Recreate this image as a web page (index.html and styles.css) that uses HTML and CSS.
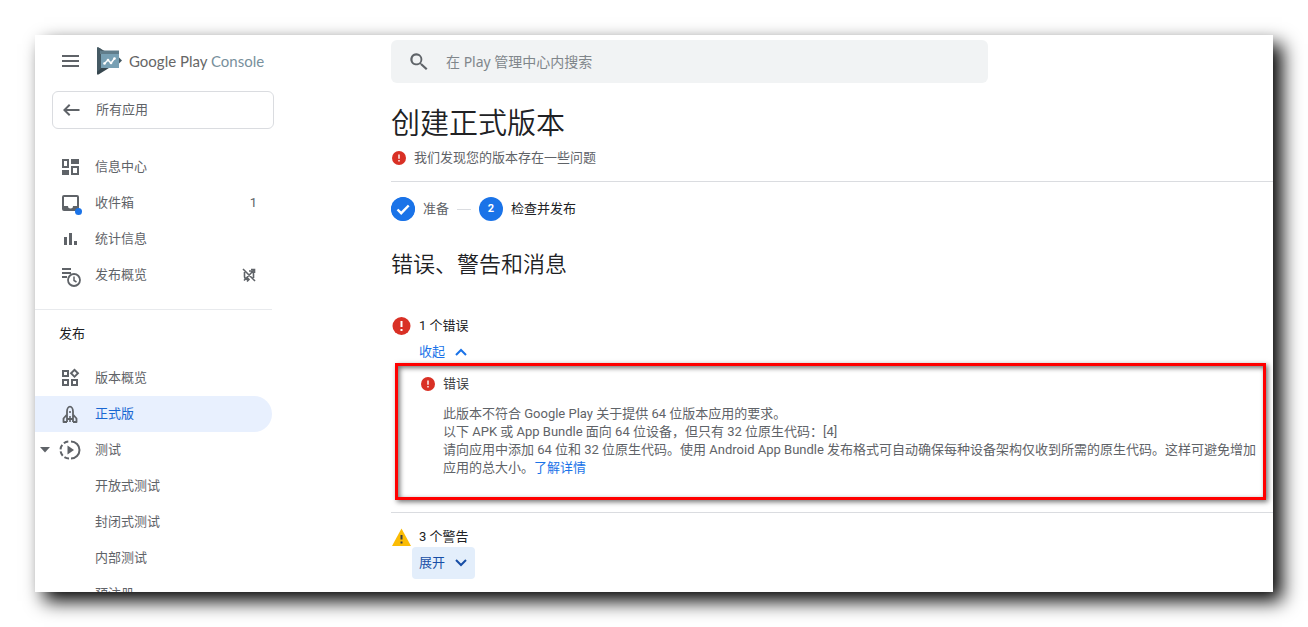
FILE: index.html
```html
<!DOCTYPE html>
<html lang="zh-CN">
<head>
<meta charset="utf-8">
<title>Google Play Console</title>
<link rel="stylesheet" href="styles.css">
</head>
<body>
<div class="window">
  <aside class="sidebar">
    <div class="brand">
      <button class="icon-button" aria-label="菜单"><svg class="icon" viewBox="0 0 24 24"><path d="M4 6h17v2H4zM4 11h17v2H4zM4 16h17v2H4z"/></svg></button>
      <svg class="logo" viewBox="0 0 26 28"><path fill="#37474f" d="M1 .5h1.500L25 13.500 2.500 27.500H1z"/><path fill="#455a64" d="M1 .5h1.500L5 2v19.500L1 25z"/><path fill="#607d8b" d="M4 3.500h19V7H4z"/><path fill="#78a0b4" d="M5 7h18v14H5z"/><path fill="#455a64" d="m23 10.500 3 3-3 3z"/><path fill="none" stroke="#fff" stroke-width="1.500" d="m8.500 16.500 3.500-3.500 3 3 3.500-4.500"/><g fill="#fff"><circle cx="8.500" cy="16.500" r="1.300"/><circle cx="12" cy="13" r="1.300"/><circle cx="15" cy="16" r="1.300"/><circle cx="18.500" cy="11.500" r="1.300"/></g></svg>
      <span class="wordmark"><span class="wordmark-main">Google Play</span> Console</span>
    </div>
    <button class="back"><svg class="icon" viewBox="0 0 24 24"><path d="M20.500 11H7.800l3.600-3.600L10 6l-6 6 6 6 1.400-1.400L7.800 13H20.500z"/></svg><span>所有应用</span></button>
    <nav class="nav">
      <a class="item" href="#"><svg class="icon" viewBox="0 0 24 24"><path fill-rule="evenodd" d="M4 4h7v9H4zm2 2v5h3V6zM13 4h8v5h-8zM4 15h7v5H4zM13 11h8v9h-8zm2 2v5h4v-5z"/></svg><span>信息中心</span></a>
      <a class="item" href="#"><svg class="icon" viewBox="0 0 24 24"><path fill-rule="evenodd" d="M6 4h13a2 2 0 0 1 2 2v14H6a2 2 0 0 1-2-2V6a2 2 0 0 1 2-2zm0 2v9h4a2.500 2.500 0 0 0 5 0h4V6z"/><circle cx="20.500" cy="20.500" r="3.500" fill="#1a73e8"/></svg><span>收件箱</span><span class="tail">1</span></a>
      <a class="item" href="#"><svg class="icon" viewBox="0 0 24 24"><path d="M6 10h3v8H6zM11 6h3v12h-3zM16 14h3v4h-3z"/></svg><span>统计信息</span></a>
      <a class="item" href="#"><svg class="icon" viewBox="0 0 24 24"><path d="M4 5h9v2H4zM4 9h9v2H4zM4 13h5v2H4z"/><circle cx="16" cy="17" r="6" fill="none" stroke="currentColor" stroke-width="1.800"/><path fill="none" stroke="currentColor" stroke-width="1.500" d="M16 13.500v4l2.500 1.500"/></svg><span>发布概览</span><svg class="icon small tail" viewBox="0 0 16 16"><path fill="none" stroke="currentColor" stroke-width="1.600" d="m2 2 12 12M3.500 5v4.500a3 3 0 0 0 3 3h1M6 10.500l2 2-2 2M12.500 11V7a3 3 0 0 0-3-3H8M10 2.500H13.500V6M13.500 2.500 3 13.500"/></svg></a>
    </nav>
    <h2 class="group">发布</h2>
    <nav class="nav">
      <a class="item" href="#"><svg class="icon" viewBox="0 0 24 24"><path fill-rule="evenodd" d="M4 4h7v7H4zm2 2v3h3V6zM4 13h7v7H4zm2 2v3h3v-3zM13 13h7v7h-7zm2 2v3h3v-3zM16.500 2.500l4.800 4.800-4.800 4.800-4.800-4.800zm0 2.700-2.100 2.100 2.100 2.100 2.100-2.100z"/></svg><span>版本概览</span></a>
      <a class="item active" href="#" aria-current="page"><svg class="icon" viewBox="0 0 24 24"><path fill="none" stroke="currentColor" stroke-width="1.800" stroke-linejoin="round" d="M9 20V9.500C9 7 10.300 4.700 12 4.700s3 2.300 3 4.800V20M9 12.500l-3.500 4V20H9m6-7.500 3.500 4V20H15M8.500 17h7"/><path d="M11.200 9h1.600v2h-1.600zM11.200 14h1.600v6h-1.600z"/></svg><span>正式版</span></a>
      <a class="item parent" href="#"><svg class="caret" viewBox="0 0 10 6"><path d="M0 0h10L5 5.500z"/></svg><svg class="icon" viewBox="0 0 24 24"><path fill="none" stroke="currentColor" stroke-width="2" d="M13 3.500a8.500 8.500 0 0 1 0 17"/><path fill="none" stroke="currentColor" stroke-width="2" stroke-dasharray="4.800 2.200" d="M11 20.500a8.500 8.500 0 0 1 0-17"/><path d="M9.500 7.500v9l6.500-4.500z"/></svg><span>测试</span></a>
      <a class="item child" href="#">开放式测试</a>
      <a class="item child" href="#">封闭式测试</a>
      <a class="item child" href="#">内部测试</a>
      <a class="item child" href="#">预注册</a>
    </nav>
  </aside>
  <main class="main">
    <label class="search"><svg class="icon" viewBox="0 0 24 24"><path d="M15 13.500h-.8l-.3-.3A6 6 0 1 0 13.200 13.900l.3.300v.8l5.500 5 1.500-1.500zm-5.500 0a4 4 0 1 1 0-8 4 4 0 0 1 0 8z"/></svg><input type="search" placeholder="在 Play 管理中心内搜索" aria-label="在 Play 管理中心内搜索"></label>
    <header class="head">
      <h1>创建正式版本</h1>
      <p class="status"><svg class="alert" viewBox="0 0 20 20"><circle cx="10" cy="10" r="10" fill="#d93025"/><path fill="#fff" d="M9 5h2v6H9zM9 13h2v2H9z"/></svg><span>我们发现您的版本存在一些问题</span></p>
    </header>
    <ol class="steps">
      <li class="step done"><svg class="dot" viewBox="0 0 24 24"><circle cx="12" cy="12" r="12" fill="#1a73e8"/><path fill="none" stroke="#fff" stroke-width="2.400" d="m6.500 12.500 3.700 3.700 7.500-7.700"/></svg><span>准备</span></li>
      <li class="step"><span class="dot">2</span><span>检查并发布</span></li>
    </ol>
    <h2 class="section">错误、警告和消息</h2>
    <section class="issues">
      <h3><svg class="mark" viewBox="0 0 20 20"><circle cx="10.500" cy="10" r="9" fill="#d93025"/><path fill="#fff" d="M9.500 5h2v6h-2zM9.500 13h2v2h-2z"/></svg><span>1 个错误</span></h3>
      <button class="toggle"><span>收起</span><svg viewBox="0 0 12 8"><path d="m1 7 5-5 5 5"/></svg></button>
      <article class="error">
        <h4><svg class="alert" viewBox="0 0 20 20"><circle cx="10" cy="10" r="10" fill="#d93025"/><path fill="#fff" d="M9 5h2v6H9zM9 13h2v2H9z"/></svg><span>错误</span></h4>
        <p>此版本不符合 Google Play 关于提供 64 位版本应用的要求。<br>以下 APK 或 App Bundle 面向 64 位设备，但只有 32 位原生代码：[4]<br>请向应用中添加 64 位和 32 位原生代码。使用 Android App Bundle 发布格式可自动确保每种设备架构仅收到所需的原生代码。这样可避免增加应用的总大小。<a href="#">了解详情</a></p>
      </article>
    </section>
    <section class="issues warnings">
      <h3><svg class="mark" viewBox="0 0 20 20"><path fill="#fbbc04" d="M10.500 1.500 20 19H1z"/><path fill="#3c4043" d="M9.500 8h2v4.500h-2zM9.500 14.500h2v2h-2z"/></svg><span>3 个警告</span></h3>
      <button class="toggle filled"><span>展开</span><svg viewBox="0 0 12 8"><path d="m1 1 5 5 5-5"/></svg></button>
    </section>
  </main>
</div>
</body>
</html>
```
FILE: styles.css
```css
* { box-sizing: border-box; }
body {
  margin: 0;
  padding: 35px;
  height: 100vh;
  overflow: hidden;
  background: #fff;
  color: #202124;
  font: 13px/20px Roboto, "Noto Sans CJK SC", sans-serif;
}
h1, h2, h3, h4, p, ol { margin: 0; padding: 0; font-weight: 400; }
button, input { font: inherit; color: inherit; border: 0; background: none; padding: 0; }
a { color: #1a73e8; text-decoration: none; }
svg { display: block; flex: none; }
.window {
  display: flex;
  height: 100%;
  background: #fff;
  box-shadow: 9px 9px 18px #000;
}
.window > * { overflow: hidden; }

.sidebar { width: 239px; flex: none; color: #5f6368; }
.icon { width: 24px; height: 24px; fill: #5f6368; color: #5f6368; }
.small { width: 16px; height: 16px; }
.brand { display: flex; align-items: center; height: 52px; padding-left: 23px; }
.logo { width: 26px; height: 28px; margin: 0 7px 0 14px; }
.wordmark { font-family: Lato, sans-serif; font-size: 15px; color: #78909c; white-space: nowrap; }
.wordmark-main { color: #666; }
.back {
  display: flex;
  align-items: center;
  gap: 13px;
  width: 222px;
  height: 38px;
  margin: 4px 0 20px 17px;
  padding-left: 6px;
  border: 1px solid #dadce0;
  border-radius: 6px;
}
.nav { margin-right: 2px; }
.item {
  display: flex;
  align-items: center;
  gap: 13px;
  height: 36px;
  padding: 0 15px 0 23px;
  color: #5f6368;
}
.tail { margin-left: auto; }
.active { background: #e8f0fe; color: #1967d2; border-radius: 0 18px 18px 0; }
.parent { padding-left: 5px; gap: 0; }
.parent .icon { margin: 0 13px 0 8px; }
.caret { width: 10px; height: 6px; fill: #5f6368; }
.child { padding-left: 60px; }
.group {
  margin: 16px 2px 16px 0;
  padding: 14px 0 0 24px;
  border-top: 1px solid #e8eaed;
  font-size: 13px;
  color: #202124;
}

.main { flex: 1; min-width: 0; padding: 5px 0 0 117px; }
.search {
  display: flex;
  align-items: center;
  gap: 15px;
  height: 43px;
  max-width: 597px;
  padding: 0 16px;
  border-radius: 6px;
  background: #f1f3f4;
}
.search input { flex: 1; min-width: 0; outline: 0; font: 14px/20px "Noto Sans", "Noto Sans CJK SC", sans-serif; }
.search input::placeholder { color: #80868b; opacity: 1; }
.head { padding: 21px 0 13px; border-bottom: 1px solid #dadce0; }
h1 { font-size: 29px; line-height: 40px; font-weight: 350; }
.status, h4 { display: flex; align-items: center; gap: 8px; color: #5f6368; }
.status { margin-top: 4px; padding-left: 1px; }
.alert { width: 14px; height: 14px; }
.steps { display: flex; align-items: center; margin-top: 15px; list-style: none; }
.step { display: flex; align-items: center; gap: 8px; }
.step .dot {
  width: 24px;
  height: 24px;
  border-radius: 50%;
  background: #1a73e8;
  color: #fff;
  font-size: 11px;
  font-weight: 700;
  line-height: 24px;
  text-align: center;
}
.done { color: #5f6368; }
.done::after { content: ""; width: 14px; margin-right: 8px; border-top: 1px solid #dadce0; }
.section { margin-top: 28px; font-size: 22px; line-height: 32px; font-weight: 350; }
.issues { margin-top: 35px; }
h3 { display: flex; align-items: center; gap: 8px; height: 20px; font-size: 13px; }
.mark { width: 20px; height: 20px; }
.toggle {
  display: flex;
  align-items: center;
  gap: 10px;
  height: 32px;
  margin-left: 21px;
  padding: 0 8px 0 7px;
  border-radius: 4px;
  color: #1a73e8;
}
.toggle svg { width: 12px; height: 8px; fill: none; stroke: currentColor; stroke-width: 2; }
.filled { background: #e3eefb; color: #174ea6; }
.error {
  margin: -5px 7px 12px 4px;
  padding: 8px 4px 20px 23px;
  border: 3px solid #f00;
  box-shadow: 2px 2px 5px rgba(0, 0, 0, .55), inset 2px 2px 5px rgba(0, 0, 0, .55);
  line-height: 18px;
}
h4 { font-size: 13px; line-height: 20px; color: #3c4043; }
.error p { margin: 11px 0 0 22px; color: #5f6368; }
.warnings { margin-top: 0; padding-top: 14px; border-top: 1px solid #dadce0; }
```
